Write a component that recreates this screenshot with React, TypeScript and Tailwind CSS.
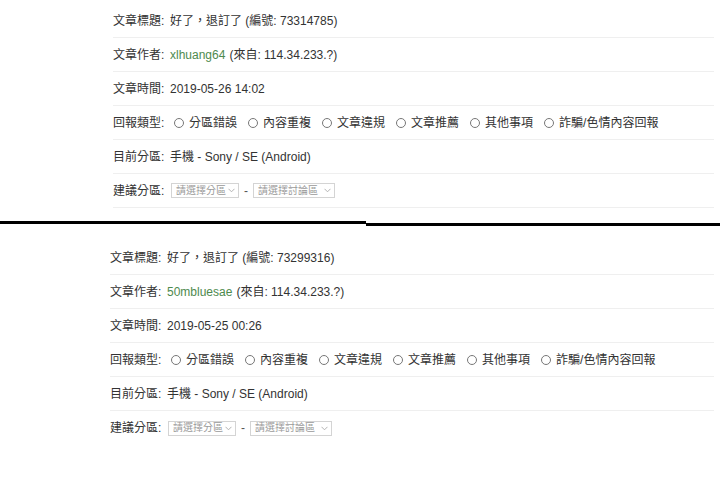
import React from "react";

type Report = {
  id: string;
  author: string;
  ip: string;
  time: string;
};

const OPTIONS = ["分區錯誤", "內容重複", "文章違規", "文章推薦", "其他事項", "詐騙/色情內容回報"];

const Chevron: React.FC = () => (
  <svg width="7" height="5" viewBox="0 0 7 5" className="ml-auto shrink-0">
    <path d="M0.5 0.8 L3.5 3.8 L6.5 0.8" fill="none" stroke="#aaa" strokeWidth="0.9" />
  </svg>
);

const FakeSelect: React.FC<{ label: string; width: string }> = ({ label, width }) => (
  <div
    className={`flex h-[15px] shrink-0 items-center whitespace-nowrap border border-[#d4d4d4] bg-white pl-[4px] pr-[3px] text-[10px] leading-none text-[#9a9a9a] ${width}`}
  >
    <span>{label}</span>
    <Chevron />
  </div>
);

const Row: React.FC<{ label: string; last?: boolean; children: React.ReactNode }> = ({
  label,
  last,
  children,
}) => (
  <div
    className={`flex h-[34px] items-center whitespace-nowrap ${last ? "" : "border-b border-[#efefef]"}`}
  >
    <span className="w-[57px] shrink-0 text-[#333]">{label}:</span>
    <div className="flex items-center">{children}</div>
  </div>
);

const ReportBlock: React.FC<{ data: Report; offset: string; lastLine: boolean }> = ({
  data,
  offset,
  lastLine,
}) => (
  <div className={offset}>
    <Row label="文章標題">
      好了，退訂了 (編號: {data.id})
    </Row>
    <Row label="文章作者">
      <span className="text-[#4e8a4e]">{data.author}</span>
      <span className="ml-[4px]">(來自: {data.ip})</span>
    </Row>
    <Row label="文章時間">{data.time}</Row>
    <Row label="回報類型">
      <span className="ml-[4px] flex items-center">
        {OPTIONS.map((o) => (
          <span key={o} className="mr-[11px] flex items-center">
            <span className="mr-[5px] h-[10px] w-[10px] rounded-full border border-[#777]" />
            {o}
          </span>
        ))}
      </span>
    </Row>
    <Row label="目前分區">手機 - Sony / SE (Android)</Row>
    <Row label="建議分區" last={!lastLine}>
      <span className="ml-[1px] flex items-center">
        <FakeSelect label="請選擇分區" width="w-[68px]" />
        <span className="mx-[5px] text-[#555]">-</span>
        <FakeSelect label="請選擇討論區" width="w-[82px]" />
      </span>
    </Row>
  </div>
);

export default function App() {
  const first: Report = {
    id: "73314785",
    author: "xlhuang64",
    ip: "114.34.233.?",
    time: "2019-05-26 14:02",
  };
  const second: Report = {
    id: "73299316",
    author: "50mbluesae",
    ip: "114.34.233.?",
    time: "2019-05-25 00:26",
  };

  return (
    <div className="h-[487px] w-[720px] overflow-hidden bg-white font-['Liberation_Sans','Noto_Sans_CJK_TC',sans-serif] text-[12px] text-[#333]">
      <div className="pt-[4px]">
        <ReportBlock data={first} offset="ml-[8px] w-[706px] pl-[105px]" lastLine />
      </div>
      <div className="mt-[13px] flex">
        <div className="h-[3px] w-[366px] bg-black" />
        <div className="mt-[2px] h-[3px] flex-1 bg-black" />
      </div>
      <div className="pt-[15px]">
        <ReportBlock data={second} offset="ml-[6px] w-[708px] pl-[104px]" lastLine={false} />
      </div>
    </div>
  );
}
